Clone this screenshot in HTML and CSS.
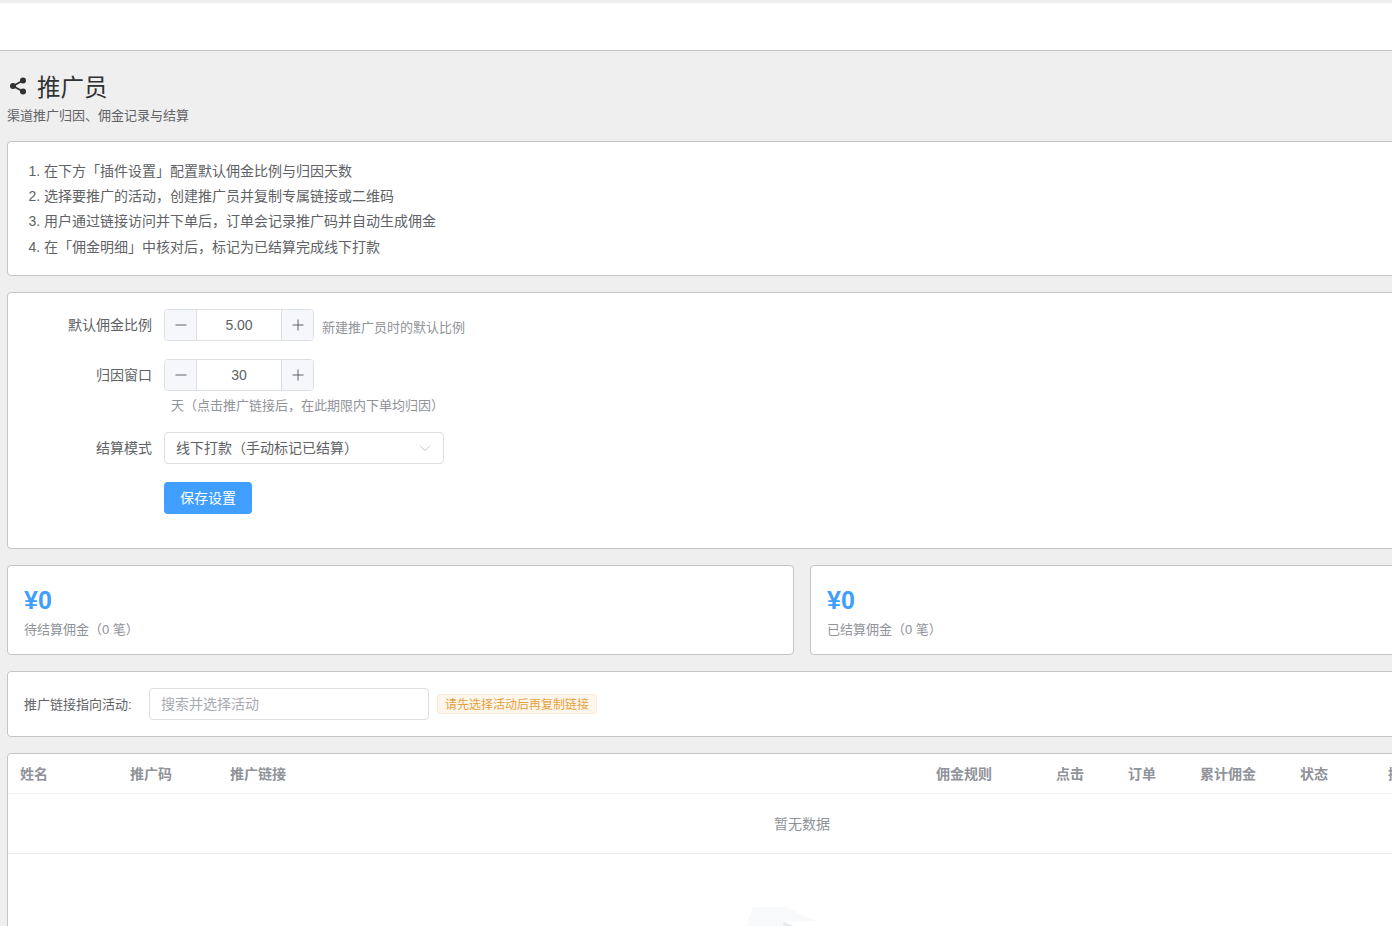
FILE: index.html
```html
<!DOCTYPE html>
<html lang="zh-CN">
<head>
    <meta charset="UTF-8">
    <title>推广员</title>
    <link rel="stylesheet" href="styles.css">
</head>
<body>
    <div class="topbar"></div>
    <div class="page">
        <h1 class="title">
            <svg class="title-icon" width="20" height="20" viewBox="0 0 20 20">
                <path d="M15 4.5 L5 10 L15 15.5" fill="none" stroke="#303133" stroke-width="1.8"/>
                <circle cx="15" cy="4.5" r="3" fill="#303133"/>
                <circle cx="5" cy="10" r="3" fill="#303133"/>
                <circle cx="15" cy="15.5" r="3" fill="#303133"/>
            </svg>
            推广员
        </h1>
        <p class="subtitle">渠道推广归因、佣金记录与结算</p>

        <div class="card">
            <ol class="steps">
                <li>在下方「插件设置」配置默认佣金比例与归因天数</li>
                <li>选择要推广的活动，创建推广员并复制专属链接或二维码</li>
                <li>用户通过链接访问并下单后，订单会记录推广码并自动生成佣金</li>
                <li>在「佣金明细」中核对后，标记为已结算完成线下打款</li>
            </ol>
        </div>

        <div class="card settings">
            <div class="form-row">
                <label class="form-label">默认佣金比例</label>
                <div class="form-field">
                    <div class="number-input">
                        <span class="step-btn minus">
                            <svg width="12" height="12" viewBox="0 0 12 12"><path d="M0.5 6 H11.5" stroke="#606266" stroke-width="1"/></svg>
                        </span>
                        <span class="number-value">5.00</span>
                        <span class="step-btn plus">
                            <svg width="12" height="12" viewBox="0 0 12 12"><path d="M0.5 6 H11.5 M6 0.5 V11.5" stroke="#606266" stroke-width="1"/></svg>
                        </span>
                    </div>
                    <span class="hint hint-side">新建推广员时的默认比例</span>
                </div>
            </div>
            <div class="form-row">
                <label class="form-label">归因窗口</label>
                <div class="form-field wrap">
                    <div class="number-input">
                        <span class="step-btn minus">
                            <svg width="12" height="12" viewBox="0 0 12 12"><path d="M0.5 6 H11.5" stroke="#606266" stroke-width="1"/></svg>
                        </span>
                        <span class="number-value">30</span>
                        <span class="step-btn plus">
                            <svg width="12" height="12" viewBox="0 0 12 12"><path d="M0.5 6 H11.5 M6 0.5 V11.5" stroke="#606266" stroke-width="1"/></svg>
                        </span>
                    </div>
                    <div class="hint hint-below">天（点击推广链接后，在此期限内下单均归因）</div>
                </div>
            </div>
            <div class="form-row">
                <label class="form-label">结算模式</label>
                <div class="form-field">
                    <div class="select">
                        <span class="select-text">线下打款（手动标记已结算）</span>
                        <svg width="12" height="12" viewBox="0 0 12 12">
                            <path d="M1 3.8 L6 8.5 L11 3.8" fill="none" stroke="#c0c4cc" stroke-width="1"/>
                        </svg>
                    </div>
                </div>
            </div>
            <div class="form-row last">
                <div class="form-label"></div>
                <button class="btn-primary">保存设置</button>
            </div>
        </div>

        <div class="stats">
            <div class="card stat">
                <div class="stat-value">¥0</div>
                <div class="stat-label">待结算佣金（0 笔）</div>
            </div>
            <div class="card stat">
                <div class="stat-value">¥0</div>
                <div class="stat-label">已结算佣金（0 笔）</div>
            </div>
        </div>

        <div class="card filter">
            <span class="filter-label">推广链接指向活动:</span>
            <div class="search-input">搜索并选择活动</div>
            <span class="tag-warning">请先选择活动后再复制链接</span>
        </div>

        <div class="table-card">
            <table class="data-table">
                <colgroup>
                    <col class="col-name">
                    <col class="col-code">
                    <col>
                    <col class="col-rule">
                    <col class="col-num">
                    <col class="col-num">
                    <col class="col-total">
                    <col class="col-status">
                    <col class="col-action">
                </colgroup>
                <thead>
                    <tr>
                        <th>姓名</th>
                        <th>推广码</th>
                        <th>推广链接</th>
                        <th>佣金规则</th>
                        <th>点击</th>
                        <th>订单</th>
                        <th>累计佣金</th>
                        <th>状态</th>
                        <th>操作</th>
                    </tr>
                </thead>
                <tbody>
                    <tr>
                        <td class="empty" colspan="9">暂无数据</td>
                    </tr>
                </tbody>
            </table>
            <div class="empty-art">
                <svg width="134" height="60" viewBox="0 0 134 60">
                    <path d="M18 0 L50 0 L81 14 L50 15 L48 19 L11 19 Z" fill="#f8f9fb"/>
                    <path d="M49 15 L59 19 L48 19 Z" fill="#e8e9ee"/>
                </svg>
            </div>
        </div>
    </div>
</body>
</html>
```

FILE: styles.css
```css
html {
    overflow: hidden;
}
body {
    margin: 0;
    width: 1392px;
    height: 926px;
    overflow: hidden;
    background-color: #efefef;
    font-family: "Liberation Sans", "Noto Sans CJK SC", sans-serif;
    color: #606266;
}
.topbar {
    margin-top: 3px;
    height: 47px;
    background-color: #fff;
    border-bottom: 1px solid #c4c4c4;
}
.page {
    width: 1590px;
    padding: 19px 0 0 7px;
}
.title {
    display: flex;
    align-items: center;
    gap: 9px;
    margin: 0;
    padding-top: 1px;
    height: 34px;
    font-size: 23.5px;
    font-weight: 400;
    line-height: 34px;
    color: #303133;
}
.title-icon {
    margin: 0 0 4px 1px;
}
.subtitle {
    margin: 1px 0 15px;
    font-size: 13px;
    line-height: 20px;
    color: #606266;
}
.card {
    box-sizing: border-box;
    background-color: #fff;
    border: 1px solid #c4c4c4;
    border-radius: 4px;
    padding: 16px;
    margin-bottom: 16px;
}
.steps {
    margin: 1px 0 -1px;
    padding-left: 20px;
    font-size: 14px;
    line-height: 25.2px;
}
.form-row {
    display: flex;
    margin-bottom: 18px;
}
.form-row.last {
    margin-bottom: 18px;
}
.form-label {
    box-sizing: border-box;
    flex: none;
    width: 140px;
    padding-right: 12px;
    text-align: right;
    font-size: 14px;
    line-height: 32px;
}
.form-field {
    display: flex;
    align-items: flex-start;
}
.form-field.wrap {
    display: block;
}
.number-input {
    box-sizing: border-box;
    display: flex;
    width: 150px;
    height: 32px;
    border: 1px solid #dcdfe6;
    border-radius: 4px;
    font-size: 14px;
    line-height: 30px;
}
.step-btn {
    box-sizing: border-box;
    display: flex;
    align-items: center;
    justify-content: center;
    flex: none;
    width: 32px;
    background-color: #f5f7fa;
}
.step-btn.minus {
    border-right: 1px solid #dcdfe6;
    border-radius: 3px 0 0 3px;
}
.step-btn.plus {
    border-left: 1px solid #dcdfe6;
    border-radius: 0 3px 3px 0;
}
.number-value {
    flex: 1;
    text-align: center;
}
.hint {
    font-size: 13px;
    line-height: 23px;
    color: #909399;
}
.hint-side {
    margin: 7px 0 0 8px;
}
.hint-below {
    margin-left: 7px;
    height: 23px;
    line-height: 30px;
}
.select {
    box-sizing: border-box;
    display: flex;
    align-items: center;
    justify-content: space-between;
    width: 280px;
    height: 32px;
    padding: 0 12px 0 11px;
    border: 1px solid #dcdfe6;
    border-radius: 4px;
    font-size: 14px;
}
.select-text {
    margin-bottom: 2px;
}
.btn-primary {
    width: 88px;
    height: 32px;
    padding: 0 0 2px;
    border: none;
    border-radius: 4px;
    background-color: #409eff;
    color: #fff;
    font-family: inherit;
    font-size: 14px;
}
.stats {
    display: grid;
    grid-template-columns: 1fr 1fr;
    gap: 16px;
}
.stat {
    height: 90px;
}
.stat-value {
    font-size: 25px;
    font-weight: 700;
    line-height: 36px;
    color: #409eff;
}
.stat-label {
    margin-top: 2px;
    font-size: 13px;
    line-height: 20px;
    color: #909399;
}
.filter {
    display: flex;
    align-items: center;
}
.filter-label {
    width: 125px;
    font-size: 13px;
}
.search-input {
    box-sizing: border-box;
    width: 280px;
    height: 32px;
    padding-left: 11px;
    border: 1px solid #dcdfe6;
    border-radius: 4px;
    font-size: 14px;
    line-height: 30px;
    color: #a8abb2;
}
.tag-warning {
    box-sizing: border-box;
    margin-left: 8px;
    width: 160px;
    height: 20px;
    padding-left: 7px;
    border: 1px solid #faecd8;
    border-radius: 3px;
    background-color: #fdf6ec;
    color: #e6a23c;
    font-size: 12px;
    line-height: 20px;
}
.table-card {
    background-color: #fff;
    border: 1px solid #c4c4c4;
    border-radius: 4px;
    height: 400px;
}
.data-table {
    width: 100%;
    table-layout: fixed;
    border-collapse: collapse;
    font-size: 14px;
}
.col-name { width: 110px; }
.col-code { width: 100px; }
.col-rule { width: 120px; }
.col-num { width: 72px; }
.col-total { width: 100px; }
.col-status { width: 88px; }
.col-action { width: 220px; }
.data-table th {
    height: 39px;
    padding: 0 12px;
    text-align: left;
    font-weight: 700;
    color: #909399;
    border-bottom: 1px solid #ebeef5;
}
.data-table .empty {
    height: 59px;
    padding: 0;
    text-align: center;
    color: #909399;
    border-bottom: 1px solid #ebeef5;
}
.empty-art {
    display: flex;
    justify-content: center;
    padding-top: 53px;
}
```
